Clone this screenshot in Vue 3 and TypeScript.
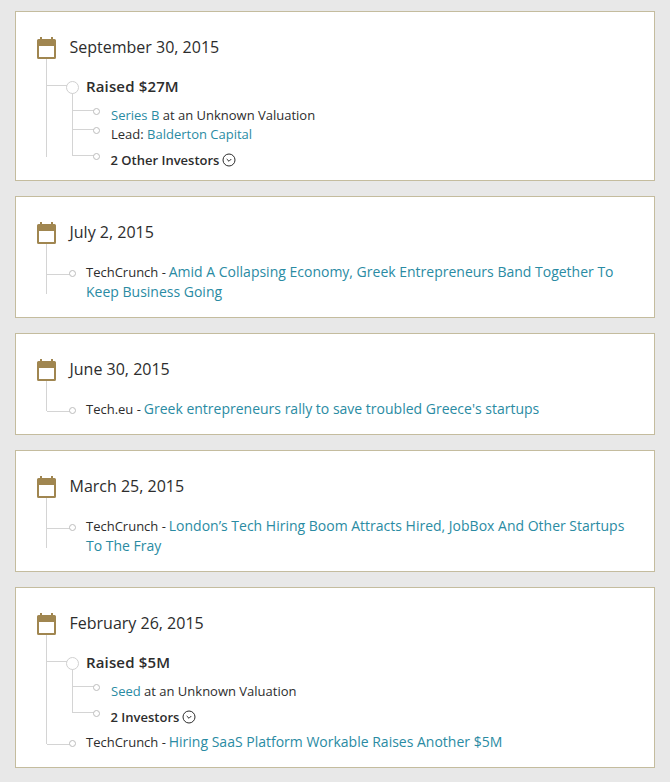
<script setup lang="ts">
interface Funding {
  amount: string
  details: { link?: string; text?: string; prefix?: string }[]
  investors: string
}
interface News {
  source: string
  title: string
}
interface Entry {
  date: string
  funding?: Funding
  news?: News
}

const entries: Entry[] = [
  {
    date: 'September 30, 2015',
    funding: {
      amount: 'Raised $27M',
      details: [
        { link: 'Series B', text: ' at an Unknown Valuation' },
        { prefix: 'Lead: ', link: 'Balderton Capital' },
      ],
      investors: '2 Other Investors',
    },
  },
  {
    date: 'July 2, 2015',
    news: { source: 'TechCrunch', title: 'Amid A Collapsing Economy, Greek Entrepreneurs Band Together To Keep Business Going' },
  },
  {
    date: 'June 30, 2015',
    news: { source: 'Tech.eu', title: "Greek entrepreneurs rally to save troubled Greece's startups" },
  },
  {
    date: 'March 25, 2015',
    news: { source: 'TechCrunch', title: 'London’s Tech Hiring Boom Attracts Hired, JobBox And Other Startups To The Fray' },
  },
  {
    date: 'February 26, 2015',
    funding: {
      amount: 'Raised $5M',
      details: [{ link: 'Seed', text: ' at an Unknown Valuation' }],
      investors: '2 Investors',
    },
    news: { source: 'TechCrunch', title: 'Hiring SaaS Platform Workable Raises Another $5M' },
  },
]
</script>

<template>
  <main class="page">
    <section v-for="entry in entries" :key="entry.date" class="card">
      <header class="head">
        <svg class="cal" width="19" height="22" viewBox="0 0 19 22" aria-hidden="true">
          <path fill="#a08650" d="M3 0h2v2h9V0h2v2h1.500A1.500 1.500 0 0 1 19 3.500V20.500A1.500 1.500 0 0 1 17.500 22H1.500A1.500 1.500 0 0 1 0 20.500V3.500A1.500 1.500 0 0 1 1.500 2H3z" />
          <rect x="2" y="9" width="15" height="11" fill="#fff" />
        </svg>
        <h2 class="date">{{ entry.date }}</h2>
      </header>
      <div class="body">
        <div v-if="entry.funding" class="funding">
          <div class="raised"><span class="big-dot"></span>{{ entry.funding.amount }}</div>
          <ul class="details">
            <li v-for="(d, i) in entry.funding.details" :key="i" class="detail">
              <span class="dot"></span>{{ d.prefix }}<a v-if="d.link" class="link">{{ d.link }}</a>{{ d.text }}
            </li>
            <li class="detail investors">
              <span class="dot"></span><span class="investors-label">{{ entry.funding.investors }}</span>
              <svg class="chev" width="14" height="14" viewBox="0 0 14 14" aria-hidden="true">
                <circle cx="7" cy="7" r="6" fill="none" stroke="#2b2b2b" stroke-width="1" />
                <path d="M4.700 6l2.300 2.300L9.300 6" fill="none" stroke="#2b2b2b" stroke-width="1" />
              </svg>
            </li>
          </ul>
        </div>
        <p v-if="entry.news" class="news">
          <span class="dot"></span>{{ entry.news.source }} - <a class="link title">{{ entry.news.title }}</a>
        </p>
      </div>
    </section>
  </main>
</template>

<style>
html,
body {
  margin: 0;
  background: #e8e8e8;
}
</style>

<style scoped>
.page {
  display: flex;
  flex-direction: column;
  gap: 15px;
  padding: 11px 15px 14px;
  font-family: "Open Sans", sans-serif;
  font-size: 13px;
  line-height: 20px;
  color: #2d2d2d;
}
.card {
  background: #fff;
  border: 1px solid #c4bc9e;
  padding: 25px 20px 5px 21px;
}
.head {
  display: flex;
  align-items: center;
  gap: 13.500px;
  height: 22px;
}
.cal {
  flex: none;
}
.date {
  margin: 0;
  font-size: 16px;
  font-weight: 400;
  line-height: 22px;
  color: #2d2d2d;
  position: relative;
  top: -1px;
}
.body {
  position: relative;
  padding: 18px 0 0 49px;
}
.body::before {
  content: "";
  position: absolute;
  left: 9px;
  top: 0;
  bottom: 18px;
  width: 1px;
  background: #d4d4d4;
}
.funding {
  padding-bottom: 5px;
}
.raised {
  position: relative;
  font-size: 15px;
  font-weight: 600;
  line-height: 19px;
  height: 20px;
  letter-spacing: 0.15px;
}
.raised::before {
  content: "";
  position: absolute;
  left: -39px;
  top: 8px;
  width: 20px;
  height: 1px;
  background: #d4d4d4;
}
.big-dot {
  position: absolute;
  left: -20px;
  top: 4px;
  box-sizing: border-box;
  width: 13px;
  height: 13px;
  border: 1px solid #d0d0d0;
  border-radius: 50%;
  background: #fff;
}
.details {
  position: relative;
  list-style: none;
  margin: 8px 0 0;
  padding: 0 0 0 25px;
}
.details::before {
  content: "";
  position: absolute;
  left: -14px;
  top: -12px;
  bottom: 15px;
  width: 1px;
  background: #d4d4d4;
}
.detail {
  position: relative;
  height: 19px;
  line-height: 20px;
}
.detail::before {
  content: "";
  position: absolute;
  left: -39px;
  top: 5px;
  width: 22px;
  height: 1px;
  background: #d4d4d4;
}
.detail > .dot {
  left: -18px;
  top: 3px;
}
.investors {
  display: flex;
  align-items: center;
  gap: 3px;
  height: 20px;
  margin-top: 7px;
  font-weight: 600;
}
.investors-label {
  margin-left: -0.5px;
}
.chev {
  flex: none;
}
.dot {
  position: absolute;
  left: -17px;
  top: 8px;
  box-sizing: border-box;
  width: 7px;
  height: 7px;
  border: 1px solid #bdbdbd;
  border-radius: 50%;
  background: #fff;
}
.news {
  position: relative;
  margin: 0;
  padding-bottom: 10px;
}
.news::before {
  content: "";
  position: absolute;
  left: -39px;
  top: 12px;
  width: 23px;
  height: 1px;
  background: #d4d4d4;
}
.link {
  color: #2a8ba3;
  text-decoration: none;
}
.title {
  font-size: 14px;
  margin-left: -0.5px;
}
</style>
